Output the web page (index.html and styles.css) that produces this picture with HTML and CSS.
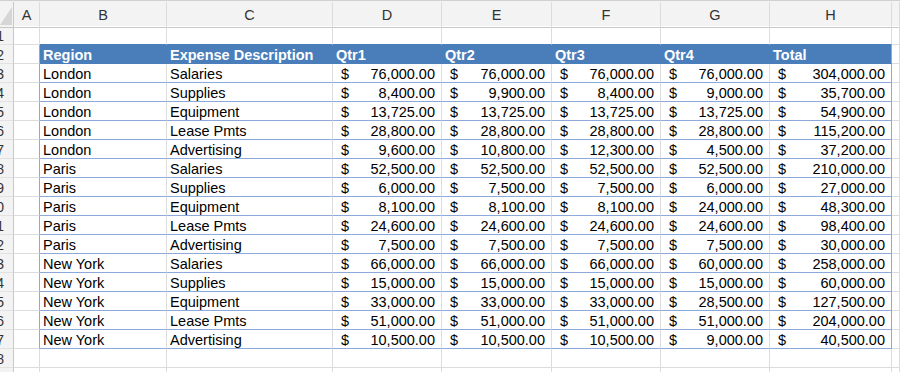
FILE: index.html
```html
<!DOCTYPE html>
<html>
<head>
<meta charset="utf-8">
<link rel="stylesheet" href="styles.css">
</head>
<body>
<div class="sheet">
  <div class="row colheads">
    <div class="corner"><span class="tri"></span></div>
    <div class="ch">A</div><div class="ch">B</div><div class="ch">C</div><div class="ch">D</div><div class="ch">E</div><div class="ch">F</div><div class="ch">G</div><div class="ch">H</div><div class="ch"></div>
  </div>
  <div class="row">
    <div class="rh"><span>1</span></div>
    <div class="c"></div><div class="c top"></div><div class="c top"></div><div class="c top"></div><div class="c top"></div><div class="c top"></div><div class="c top"></div><div class="c top"></div><div class="c"></div>
  </div>
  <div class="row">
    <div class="rh"><span>2</span></div>
    <div class="c tl"></div>
    <div class="c th">Region</div><div class="c th">Expense Description</div><div class="c th">Qtr1</div><div class="c th">Qtr2</div><div class="c th">Qtr3</div><div class="c th">Qtr4</div><div class="c th tr">Total</div>
    <div class="c"></div>
  </div>
  <div class="row"><div class="rh"><span>3</span></div><div class="c tl"></div><div class="c t">London</div><div class="c t">Salaries</div><div class="c t acc"><span>$</span><span>76,000.00</span></div><div class="c t acc"><span>$</span><span>76,000.00</span></div><div class="c t acc"><span>$</span><span>76,000.00</span></div><div class="c t acc"><span>$</span><span>76,000.00</span></div><div class="c t tr acc h"><span>$</span><span>304,000.00</span></div><div class="c"></div></div>
  <div class="row"><div class="rh"><span>4</span></div><div class="c tl"></div><div class="c t">London</div><div class="c t">Supplies</div><div class="c t acc"><span>$</span><span>8,400.00</span></div><div class="c t acc"><span>$</span><span>9,900.00</span></div><div class="c t acc"><span>$</span><span>8,400.00</span></div><div class="c t acc"><span>$</span><span>9,000.00</span></div><div class="c t tr acc h"><span>$</span><span>35,700.00</span></div><div class="c"></div></div>
  <div class="row"><div class="rh"><span>5</span></div><div class="c tl"></div><div class="c t">London</div><div class="c t">Equipment</div><div class="c t acc"><span>$</span><span>13,725.00</span></div><div class="c t acc"><span>$</span><span>13,725.00</span></div><div class="c t acc"><span>$</span><span>13,725.00</span></div><div class="c t acc"><span>$</span><span>13,725.00</span></div><div class="c t tr acc h"><span>$</span><span>54,900.00</span></div><div class="c"></div></div>
  <div class="row"><div class="rh"><span>6</span></div><div class="c tl"></div><div class="c t">London</div><div class="c t">Lease Pmts</div><div class="c t acc"><span>$</span><span>28,800.00</span></div><div class="c t acc"><span>$</span><span>28,800.00</span></div><div class="c t acc"><span>$</span><span>28,800.00</span></div><div class="c t acc"><span>$</span><span>28,800.00</span></div><div class="c t tr acc h"><span>$</span><span>115,200.00</span></div><div class="c"></div></div>
  <div class="row"><div class="rh"><span>7</span></div><div class="c tl"></div><div class="c t">London</div><div class="c t">Advertising</div><div class="c t acc"><span>$</span><span>9,600.00</span></div><div class="c t acc"><span>$</span><span>10,800.00</span></div><div class="c t acc"><span>$</span><span>12,300.00</span></div><div class="c t acc"><span>$</span><span>4,500.00</span></div><div class="c t tr acc h"><span>$</span><span>37,200.00</span></div><div class="c"></div></div>
  <div class="row"><div class="rh"><span>8</span></div><div class="c tl"></div><div class="c t">Paris</div><div class="c t">Salaries</div><div class="c t acc"><span>$</span><span>52,500.00</span></div><div class="c t acc"><span>$</span><span>52,500.00</span></div><div class="c t acc"><span>$</span><span>52,500.00</span></div><div class="c t acc"><span>$</span><span>52,500.00</span></div><div class="c t tr acc h"><span>$</span><span>210,000.00</span></div><div class="c"></div></div>
  <div class="row"><div class="rh"><span>9</span></div><div class="c tl"></div><div class="c t">Paris</div><div class="c t">Supplies</div><div class="c t acc"><span>$</span><span>6,000.00</span></div><div class="c t acc"><span>$</span><span>7,500.00</span></div><div class="c t acc"><span>$</span><span>7,500.00</span></div><div class="c t acc"><span>$</span><span>6,000.00</span></div><div class="c t tr acc h"><span>$</span><span>27,000.00</span></div><div class="c"></div></div>
  <div class="row"><div class="rh"><span>10</span></div><div class="c tl"></div><div class="c t">Paris</div><div class="c t">Equipment</div><div class="c t acc"><span>$</span><span>8,100.00</span></div><div class="c t acc"><span>$</span><span>8,100.00</span></div><div class="c t acc"><span>$</span><span>8,100.00</span></div><div class="c t acc"><span>$</span><span>24,000.00</span></div><div class="c t tr acc h"><span>$</span><span>48,300.00</span></div><div class="c"></div></div>
  <div class="row"><div class="rh"><span>11</span></div><div class="c tl"></div><div class="c t">Paris</div><div class="c t">Lease Pmts</div><div class="c t acc"><span>$</span><span>24,600.00</span></div><div class="c t acc"><span>$</span><span>24,600.00</span></div><div class="c t acc"><span>$</span><span>24,600.00</span></div><div class="c t acc"><span>$</span><span>24,600.00</span></div><div class="c t tr acc h"><span>$</span><span>98,400.00</span></div><div class="c"></div></div>
  <div class="row"><div class="rh"><span>12</span></div><div class="c tl"></div><div class="c t">Paris</div><div class="c t">Advertising</div><div class="c t acc"><span>$</span><span>7,500.00</span></div><div class="c t acc"><span>$</span><span>7,500.00</span></div><div class="c t acc"><span>$</span><span>7,500.00</span></div><div class="c t acc"><span>$</span><span>7,500.00</span></div><div class="c t tr acc h"><span>$</span><span>30,000.00</span></div><div class="c"></div></div>
  <div class="row"><div class="rh"><span>13</span></div><div class="c tl"></div><div class="c t">New York</div><div class="c t">Salaries</div><div class="c t acc"><span>$</span><span>66,000.00</span></div><div class="c t acc"><span>$</span><span>66,000.00</span></div><div class="c t acc"><span>$</span><span>66,000.00</span></div><div class="c t acc"><span>$</span><span>60,000.00</span></div><div class="c t tr acc h"><span>$</span><span>258,000.00</span></div><div class="c"></div></div>
  <div class="row"><div class="rh"><span>14</span></div><div class="c tl"></div><div class="c t">New York</div><div class="c t">Supplies</div><div class="c t acc"><span>$</span><span>15,000.00</span></div><div class="c t acc"><span>$</span><span>15,000.00</span></div><div class="c t acc"><span>$</span><span>15,000.00</span></div><div class="c t acc"><span>$</span><span>15,000.00</span></div><div class="c t tr acc h"><span>$</span><span>60,000.00</span></div><div class="c"></div></div>
  <div class="row"><div class="rh"><span>15</span></div><div class="c tl"></div><div class="c t">New York</div><div class="c t">Equipment</div><div class="c t acc"><span>$</span><span>33,000.00</span></div><div class="c t acc"><span>$</span><span>33,000.00</span></div><div class="c t acc"><span>$</span><span>33,000.00</span></div><div class="c t acc"><span>$</span><span>28,500.00</span></div><div class="c t tr acc h"><span>$</span><span>127,500.00</span></div><div class="c"></div></div>
  <div class="row"><div class="rh"><span>16</span></div><div class="c tl"></div><div class="c t">New York</div><div class="c t">Lease Pmts</div><div class="c t acc"><span>$</span><span>51,000.00</span></div><div class="c t acc"><span>$</span><span>51,000.00</span></div><div class="c t acc"><span>$</span><span>51,000.00</span></div><div class="c t acc"><span>$</span><span>51,000.00</span></div><div class="c t tr acc h"><span>$</span><span>204,000.00</span></div><div class="c"></div></div>
  <div class="row"><div class="rh"><span>17</span></div><div class="c tl"></div><div class="c t">New York</div><div class="c t">Advertising</div><div class="c t acc"><span>$</span><span>10,500.00</span></div><div class="c t acc"><span>$</span><span>10,500.00</span></div><div class="c t acc"><span>$</span><span>10,500.00</span></div><div class="c t acc"><span>$</span><span>9,000.00</span></div><div class="c t tr acc h"><span>$</span><span>40,500.00</span></div><div class="c"></div></div>
  <div class="row"><div class="rh"><span>18</span></div><div class="c"></div><div class="c"></div><div class="c"></div><div class="c"></div><div class="c"></div><div class="c"></div><div class="c"></div><div class="c"></div><div class="c"></div></div>
  <div class="row"><div class="rh"><span>19</span></div><div class="c"></div><div class="c"></div><div class="c"></div><div class="c"></div><div class="c"></div><div class="c"></div><div class="c"></div><div class="c"></div><div class="c"></div></div>
</div>
</body>
</html>
```

FILE: styles.css
```css
html, body {
  margin: 0;
  padding: 0;
  background: #ffffff;
}
body {
  overflow: hidden;
  width: 900px;
  height: 372px;
}
.sheet {
  font-family: "Liberation Sans", Arial, sans-serif;
  font-size: 14.5px;
  color: #000;
  padding-top: 1px;
  border-top: 1px solid #d0d0d0;
  background: #f3f3f3;
}
.row {
  display: grid;
  grid-template-columns: 14px 26px 127px 166px 109px 110px 109px 109px 122px 8px;
  height: 19px;
  background: #fff;
}
.colheads {
  height: 24px;
  background: #f3f3f3;
}
.corner {
  position: relative;
  border-right: 1px solid #c8c8c8;
  border-bottom: 1px solid #c8c8c8;
  box-sizing: border-box;
}
.tri {
  position: absolute;
  right: 1px;
  bottom: 2px;
  width: 0;
  height: 0;
  border-left: 12px solid transparent;
  border-bottom: 18px solid #d6d6d6;
}
.ch {
  box-sizing: border-box;
  border-right: 1px solid #dcdcdc;
  border-bottom: 1px solid #c8c8c8;
  text-align: center;
  color: #333;
  font-size: 14.5px;
  line-height: 24px;
  padding-top: 1px;
}
.rh {
  box-sizing: border-box;
  background: #f3f3f3;
  border-right: 1px solid #c8c8c8;
  border-bottom: 1px solid #e2e2e2;
  display: flex;
  justify-content: flex-end;
  overflow: hidden;
  padding-right: 9px;
  color: #333;
  font-size: 14px;
  line-height: 19px;
  padding-top: 1px;
  white-space: nowrap;
}
.c {
  box-sizing: border-box;
  border-right: 1px solid #dcdcdc;
  border-bottom: 1px solid #dcdcdc;
  padding: 2px 3px 0 3px;
  line-height: 16px;
  white-space: nowrap;
  overflow: hidden;
}
.c.top {
  border-bottom-color: #4a7ebb;
}
.c.tl {
  border-right-color: #8eaadb;
}
.c.th {
  background: #4a7ebb;
  border-right-color: #4a7ebb;
  border-bottom-color: #4a7ebb;
  color: #fff;
  font-weight: bold;
}
.c.t {
  border-bottom-color: #8eaadb;
}
.c.tr {
  border-right-color: #8eaadb;
}
.c.acc {
  display: flex;
  justify-content: space-between;
  padding-left: 8px;
  padding-right: 6px;
}
```
